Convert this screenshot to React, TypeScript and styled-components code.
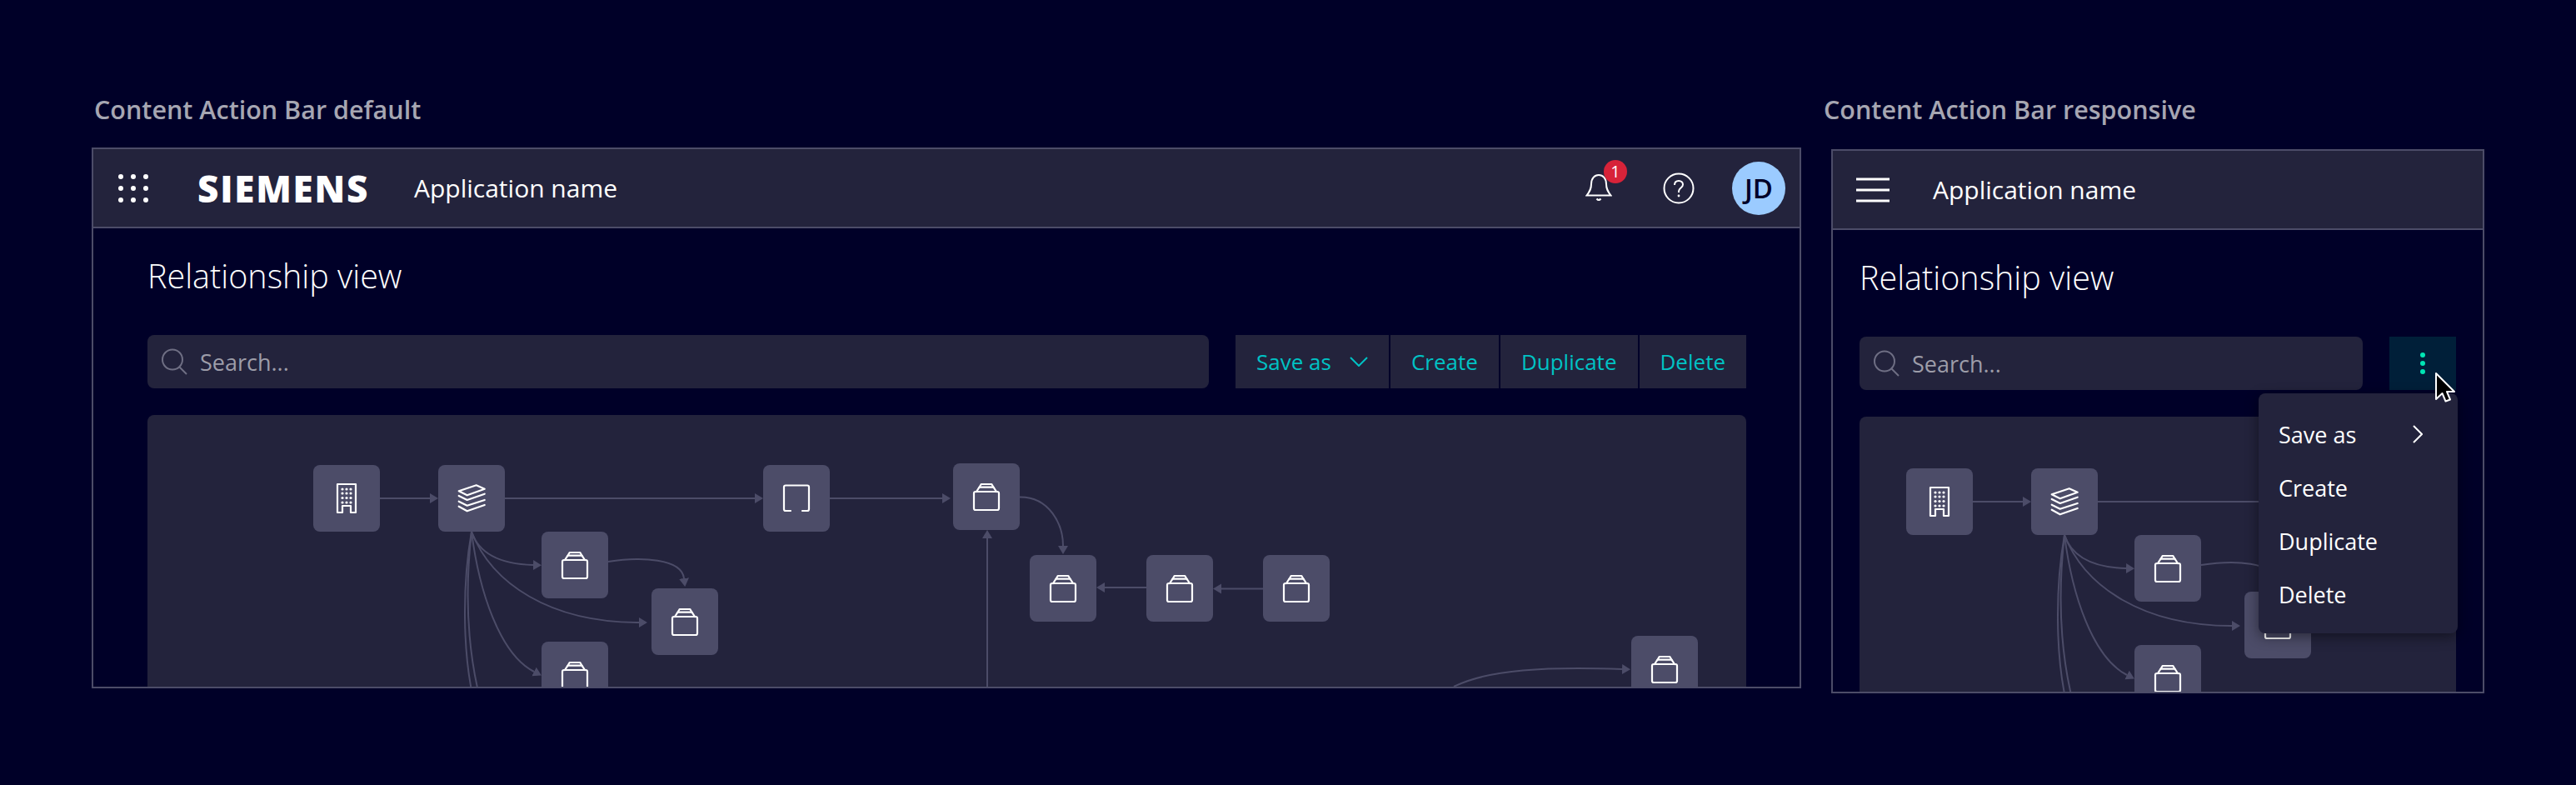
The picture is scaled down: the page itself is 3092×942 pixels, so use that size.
import { useId } from 'react';
import styled, { createGlobalStyle } from 'styled-components';

const GlobalStyle = createGlobalStyle`
  html, body {
    margin: 0;
    padding: 0;
    background: #000028;
  }
  body {
    font-family: "Open Sans", "Noto Sans", sans-serif;
  }
`;

const Page = styled.div`
  display: flex;
  width: 3092px;
  height: 942px;
  background: #000028;
  overflow: hidden;
`;

const Section = styled.section<{ $left: number; $width: number; $frameTop: number }>`
  display: flex;
  flex-direction: column;
  flex-shrink: 0;
  margin-left: ${(p) => p.$left}px;
  width: ${(p) => p.$width}px;
  padding-top: 109px;

  & > div:last-child {
    margin-top: ${(p) => p.$frameTop}px;
  }
`;

const SectionLabel = styled.h3<{ $indent: number }>`
  margin: 0 0 0 ${(p) => p.$indent}px;
  height: 44px;
  line-height: 44px;
  font-size: 30.5px;
  font-weight: 600;
  color: #a6a6b2;
  white-space: nowrap;
`;

const Frame = styled.div<{ $height: number }>`
  box-sizing: border-box;
  height: ${(p) => p.$height}px;
  border: 2px solid #4c4c68;
  overflow: hidden;
  display: flex;
  flex-direction: column;
`;

const AppHeader = styled.header`
  box-sizing: border-box;
  flex-shrink: 0;
  height: 95px;
  display: flex;
  align-items: center;
  background: #23233c;
  border-bottom: 2px solid #4c4c68;
`;

const MenuGrid = styled.svg`
  width: 40px;
  height: 40px;
  margin-left: 28px;
  flex-shrink: 0;
`;

const Hamburger = styled.svg`
  width: 40px;
  height: 32px;
  margin-left: 28px;
  flex-shrink: 0;
`;

const Logo = styled.span`
  width: 203px;
  margin-left: 57px;
  font-size: 44px;
  font-weight: 800;
  line-height: 1;
  letter-spacing: 1.8px;
  color: #fff;
  flex-shrink: 0;
`;

const AppName = styled.span<{ $gap: number }>`
  margin-left: ${(p) => p.$gap}px;
  font-size: 30px;
  font-weight: 400;
  color: #fff;
  white-space: nowrap;
`;

const HeaderActions = styled.div`
  margin-left: auto;
  margin-right: 17px;
  display: flex;
  align-items: center;
`;

const BellWrap = styled.div`
  position: relative;
  width: 32px;
  height: 34px;
  margin-right: 61px;
`;

const Badge = styled.span`
  position: absolute;
  left: 22px;
  top: -17px;
  width: 28px;
  height: 28px;
  border-radius: 50%;
  background: #d72339;
  color: #fff;
  font-size: 20px;
  line-height: 28px;
  text-align: center;
`;

const HelpIcon = styled.svg`
  width: 38px;
  height: 38px;
  margin-right: 45px;
`;

const Avatar = styled.div`
  width: 64px;
  height: 64px;
  border-radius: 50%;
  background: #9bcbff;
  color: #000028;
  font-size: 33px;
  font-weight: 600;
  line-height: 64px;
  text-align: center;
`;

const Content = styled.div<{ $left: number; $right: number }>`
  padding: 32px ${(p) => p.$right}px 0 ${(p) => p.$left}px;
`;

const PageTitle = styled.h1`
  margin: 0 0 46px;
  height: 50px;
  line-height: 50px;
  font-size: 39.5px;
  font-weight: 300;
  color: #fff;
`;

const Toolbar = styled.div`
  display: flex;
  height: 64px;
  gap: 32px;
  margin-bottom: 32px;
`;

const SearchBox = styled.div`
  flex: 1;
  display: flex;
  align-items: center;
  gap: 15px;
  padding-left: 16px;
  background: #23233c;
  border-radius: 8px;
`;

const SearchGlyph = styled.svg`
  width: 32px;
  height: 32px;
  flex-shrink: 0;
`;

const Placeholder = styled.span`
  font-size: 27px;
  color: #9d9da9;
`;

const ActionGroup = styled.div`
  display: flex;
  gap: 2px;
`;

const ActionButton = styled.button`
  display: flex;
  align-items: center;
  gap: 22px;
  height: 64px;
  padding: 0 25px;
  border: 0;
  background: #23233c;
  color: #00c2c4;
  font-family: inherit;
  font-size: 26px;
  white-space: nowrap;
`;

const ChevronDown = styled.svg`
  width: 22px;
  height: 12px;
`;

const MoreWrap = styled.div`
  position: relative;
  width: 80px;
  flex-shrink: 0;
`;

const MoreButton = styled.button`
  display: flex;
  align-items: center;
  justify-content: center;
  width: 80px;
  height: 64px;
  padding: 0;
  border: 0;
  background: #001f39;
`;

const Cursor = styled.svg`
  position: absolute;
  left: 54px;
  top: 42px;
  width: 26px;
  height: 38px;
  z-index: 3;
`;

const DropMenu = styled.div`
  position: absolute;
  top: 68px;
  right: -2px;
  width: 239px;
  height: 288px;
  box-sizing: border-box;
  padding-top: 17px;
  background: #23233c;
  border-radius: 8px;
  box-shadow: 0 4px 16px rgba(0, 0, 0, 0.45);
  z-index: 2;
`;

const MenuItem = styled.div`
  display: flex;
  align-items: center;
  justify-content: space-between;
  height: 64px;
  padding: 0 42px 0 24px;
  font-size: 27px;
  color: #fff;
`;

const Canvas = styled.div`
  position: relative;
  height: 420px;
  background: #23233c;
  border-radius: 8px;
  overflow: hidden;
`;

const Diagram = styled.div<{ $shiftX: number; $shiftY: number }>`
  position: absolute;
  left: ${(p) => p.$shiftX}px;
  top: ${(p) => p.$shiftY}px;
  width: 1919px;
  height: 420px;
`;

const Edges = styled.svg`
  position: absolute;
  left: 0;
  top: 0;
  width: 1919px;
  height: 420px;
`;

const Node = styled.div<{ $x: number; $y: number }>`
  position: absolute;
  left: ${(p) => p.$x}px;
  top: ${(p) => p.$y}px;
  width: 80px;
  height: 80px;
  display: flex;
  align-items: center;
  justify-content: center;
  background: #4c4c68;
  border-radius: 8px;
`;

const NodeGlyph = styled.svg`
  width: 40px;
  height: 40px;
  fill: none;
  stroke: #fff;
  stroke-width: 2.2;
  stroke-linejoin: round;
  stroke-linecap: round;
`;

type NodeKind = 'building' | 'stack' | 'frame' | 'box';

const BuildingIcon = () => {
  const dots: [number, number][] = [];
  [9, 14, 19.5, 25].forEach((y) => [15, 20, 25].forEach((x) => dots.push([x, y])));
  return (
    <NodeGlyph viewBox="0 0 40 40">
      <path d="M9 3H31V37H25V29H15V37H9Z" />
      {dots.map(([x, y]) => (
        <circle key={`${x}-${y}`} cx={x} cy={y} r="1.6" fill="#fff" stroke="none" />
      ))}
    </NodeGlyph>
  );
};

const StackIcon = () => (
  <NodeGlyph viewBox="0 0 40 40">
    <path d="M4.7 11.3L25.7 4.3L35.7 8.7L14.7 16.3Z" />
    <path d="M4.7 17L14.7 22L35.7 14.7" />
    <path d="M4.7 23.7L14.7 28.7L35.7 22" />
    <path d="M4.7 29.7L14.7 35.3L35.7 28" />
  </NodeGlyph>
);

const FrameIcon = () => (
  <NodeGlyph viewBox="0 0 40 40">
    <path d="M13 35H7Q5 35 5 33V6.5Q5 4.5 7 4.5H33Q35 4.5 35 6.5V33Q35 35 33 35H27" />
  </NodeGlyph>
);

const BoxIcon = () => (
  <NodeGlyph viewBox="0 0 40 40">
    <rect x="5" y="14" width="30" height="22" rx="2" />
    <path d="M8 14L11.5 8.7H28.5L32 14" />
    <path d="M11.5 8.7L13.7 5H26.3L28.5 8.7" />
  </NodeGlyph>
);

const icons: Record<NodeKind, () => React.JSX.Element> = {
  building: BuildingIcon,
  stack: StackIcon,
  frame: FrameIcon,
  box: BoxIcon,
};

const nodes: { id: string; x: number; y: number; kind: NodeKind }[] = [
  { id: 'site', x: 199, y: 60, kind: 'building' },
  { id: 'layers', x: 349, y: 60, kind: 'stack' },
  { id: 'frame', x: 739, y: 60, kind: 'frame' },
  { id: 'a', x: 473, y: 140, kind: 'box' },
  { id: 'b', x: 605, y: 208, kind: 'box' },
  { id: 'c', x: 473, y: 272, kind: 'box' },
  { id: 'd', x: 967, y: 58, kind: 'box' },
  { id: 'e', x: 1059, y: 168, kind: 'box' },
  { id: 'f', x: 1199, y: 168, kind: 'box' },
  { id: 'g', x: 1339, y: 168, kind: 'box' },
  { id: 'h', x: 1781, y: 265, kind: 'box' },
];

// arrowed edges end at the base of the head, the marker adds the last 10px
const arrowEdges = [
  'M279 100H339',
  'M429 100H729',
  'M819 100H954',
  'M1047 98.5C1083 98 1099 132 1099 157',
  'M1199 207H1149',
  'M1339 208.5H1289',
  'M1008 340V148',
  'M1568 326C1610 305 1680 302 1770 305',
  'M389 140C398 167 423 179 463 180',
  'M389 140C413 202 483 249 590 249',
  'M389 140C398 212 423 287 464 308',
  'M553 176C593 170 641 172 644 196',
];

const plainEdges = ['M389 140C378 202 378 282 391 340', 'M389 140C382 202 382 272 399 340'];

const RelationshipDiagram = ({ shiftX, shiftY }: { shiftX: number; shiftY: number }) => {
  const markerId = useId();
  return (
    <Diagram $shiftX={shiftX} $shiftY={shiftY}>
      <Edges viewBox="0 0 1919 420" fill="none" stroke="#4c4c68" strokeWidth="2">
        <defs>
          <marker
            id={markerId}
            markerUnits="userSpaceOnUse"
            markerWidth="11"
            markerHeight="14"
            refX="0"
            refY="7"
            orient="auto"
          >
            <path d="M0 1L10 7L0 13Z" fill="#4c4c68" stroke="none" />
          </marker>
        </defs>
        {arrowEdges.map((d) => (
          <path key={d} d={d} markerEnd={`url(#${markerId})`} />
        ))}
        {plainEdges.map((d) => (
          <path key={d} d={d} />
        ))}
      </Edges>
      {nodes.map((n) => {
        const Icon = icons[n.kind];
        return (
          <Node key={n.id} $x={n.x} $y={n.y}>
            <Icon />
          </Node>
        );
      })}
    </Diagram>
  );
};

const SearchField = () => (
  <SearchBox>
    <SearchGlyph viewBox="0 0 32 32" fill="none" stroke="#6f6f84" strokeWidth="2">
      <circle cx="14" cy="13.5" r="12" />
      <path d="M22.5 22.5L31 31" />
    </SearchGlyph>
    <Placeholder>Search...</Placeholder>
  </SearchBox>
);

const App = () => (
  <Page>
    <GlobalStyle />
    <Section $left={110} $width={2052} $frameTop={24}>
      <SectionLabel $indent={3}>Content Action Bar default</SectionLabel>
      <Frame $height={649}>
        <AppHeader>
          <MenuGrid viewBox="0 0 40 40" fill="#fff">
            {[6, 20, 34].map((y) =>
              [5, 20, 35].map((x) => <circle key={`${x}-${y}`} cx={x} cy={y} r="3" />)
            )}
          </MenuGrid>
          <Logo>SIEMENS</Logo>
          <AppName $gap={57}>Application name</AppName>
          <HeaderActions>
            <BellWrap>
              <svg width="32" height="34" viewBox="0 0 32 34" fill="none" stroke="#fff" strokeWidth="2">
                <path d="M1.5 25.5C5 21 7 18 7 12C7 5 11 1 16 1C21 1 25 5 25 12C25 18 27 21 30.5 25.5Z" />
                <path d="M13.5 29.5Q16 32.5 18.5 29.5" />
              </svg>
              <Badge>1</Badge>
            </BellWrap>
            <HelpIcon viewBox="0 0 38 38" fill="none" stroke="#fff" strokeWidth="2">
              <circle cx="19" cy="19" r="17.5" />
              <path d="M14 15C14 11.5 16.5 10 19 10C22 10 24 12 24 14.5C24 18 19.5 18.5 19 22.5V24" />
              <circle cx="19" cy="28" r="1.4" fill="#fff" stroke="none" />
            </HelpIcon>
            <Avatar>JD</Avatar>
          </HeaderActions>
        </AppHeader>
        <Content $left={65} $right={64}>
          <PageTitle>Relationship view</PageTitle>
          <Toolbar>
            <SearchField />
            <ActionGroup>
              <ActionButton>
                Save as
                <ChevronDown viewBox="0 0 22 12" fill="none" stroke="#00c2c4" strokeWidth="2">
                  <path d="M1 1L11 11L21 1" />
                </ChevronDown>
              </ActionButton>
              <ActionButton>Create</ActionButton>
              <ActionButton>Duplicate</ActionButton>
              <ActionButton>Delete</ActionButton>
            </ActionGroup>
          </Toolbar>
          <Canvas>
            <RelationshipDiagram shiftX={0} shiftY={0} />
          </Canvas>
        </Content>
      </Frame>
    </Section>

    <Section $left={36} $width={784} $frameTop={26}>
      <SectionLabel $indent={-9}>Content Action Bar responsive</SectionLabel>
      <Frame $height={653}>
        <AppHeader>
          <Hamburger viewBox="0 0 40 32" stroke="#fff" strokeWidth="3">
            <path d="M0 3H40M0 16H40M0 29H40" />
          </Hamburger>
          <AppName $gap={52}>Application name</AppName>
        </AppHeader>
        <Content $left={32} $right={32}>
          <PageTitle>Relationship view</PageTitle>
          <Toolbar>
            <SearchField />
            <MoreWrap>
              <MoreButton>
                <svg width="6" height="26" viewBox="0 0 6 26" fill="#00e5b4">
                  <circle cx="3" cy="3" r="3" />
                  <circle cx="3" cy="13" r="3" />
                  <circle cx="3" cy="23" r="3" />
                </svg>
              </MoreButton>
              <Cursor viewBox="0 0 26 38" fill="#000" stroke="#fff" strokeWidth="2" strokeLinejoin="round">
                <path d="M2 2V33L9.5 26L13.5 35.5L19 33.5L15 24H24Z" />
              </Cursor>
              <DropMenu>
                <MenuItem>
                  Save as
                  <svg width="12" height="22" viewBox="0 0 12 22" fill="none" stroke="#fff" strokeWidth="2">
                    <path d="M1 1L11 11L1 21" />
                  </svg>
                </MenuItem>
                <MenuItem>Create</MenuItem>
                <MenuItem>Duplicate</MenuItem>
                <MenuItem>Delete</MenuItem>
              </DropMenu>
            </MoreWrap>
          </Toolbar>
          <Canvas>
            <RelationshipDiagram shiftX={-143} shiftY={2} />
          </Canvas>
        </Content>
      </Frame>
    </Section>
  </Page>
);

export default App;
